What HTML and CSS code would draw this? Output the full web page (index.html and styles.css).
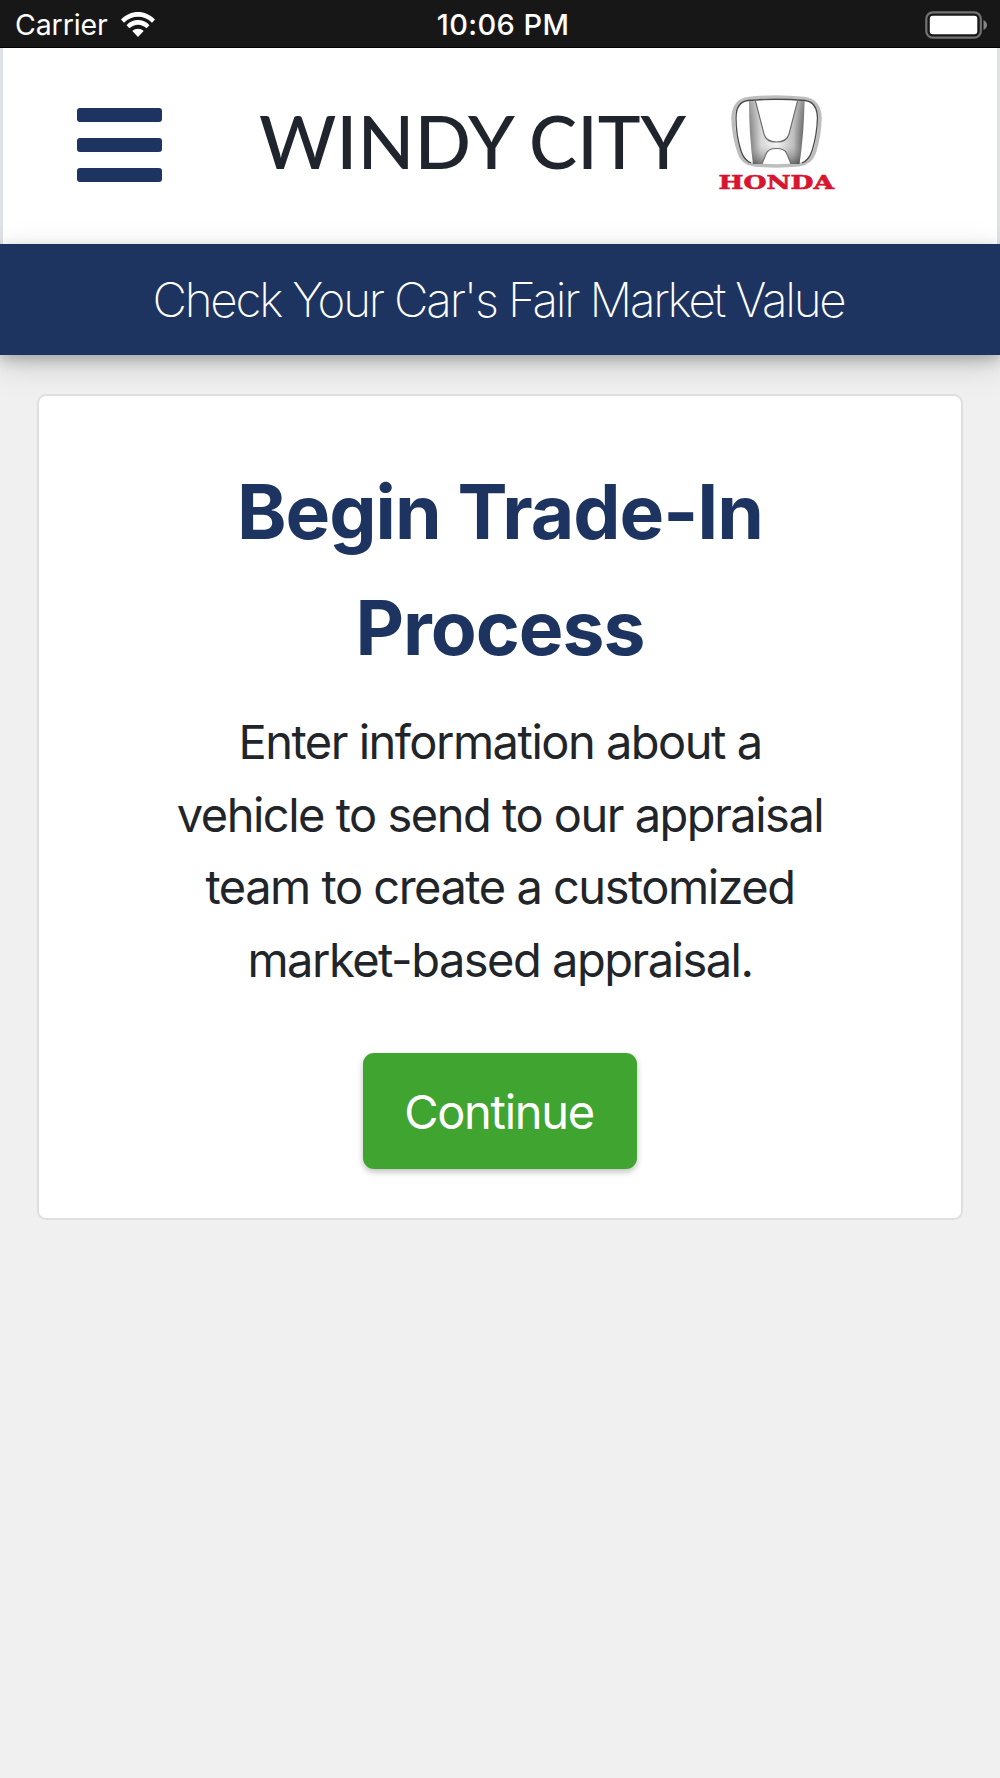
FILE: index.html
```html
<!DOCTYPE html>
<html lang="en">
    <head>
        <meta charset="UTF-8">
        <meta name="viewport" content="width=device-width, initial-scale=1.0">
        <title>Windy City Honda</title>
        <link rel="stylesheet" href="styles.css">
    </head>
    <body>

        <div class="status-bar">
            <div class="carrier">
                <span class="carrier-name">Carrier</span>
                <svg class="wifi" width="34" height="25" viewBox="0 0 34 25">
                    <path fill="#fff" d="M0 7.6C9.5-2.5 24.5-2.5 34 7.6L31 10.7C23 2.8 11 2.8 3 10.7ZM5.5 13.2C12 6.4 22 6.4 28.5 13.2L25.5 16.3C20.5 11.4 13.5 11.4 8.5 16.3ZM11.3 19C14.5 16 19.5 16 22.7 19L17 25Z"/>
                </svg>
            </div>
            <span class="clock">10:06 PM</span>
            <svg class="battery" width="65" height="30" viewBox="0 0 65 30">
                <rect x="1.3" y="2.3" width="54.5" height="25.4" rx="6.5" fill="none" stroke="#737373" stroke-width="2.2"/>
                <rect x="4.8" y="5.8" width="47.5" height="18.4" rx="3" fill="#fff"/>
                <path fill="#858585" d="M58.5 10Q62 12 62 15Q62 18 58.5 20Z"/>
            </svg>
        </div>

        <header class="header">
            <button class="menu" aria-label="Menu">
                <span></span>
                <span></span>
                <span></span>
            </button>
            <svg class="logo" width="600" height="120" viewBox="0 0 600 120">
                <defs>
                    <linearGradient id="chrome" x1="0" y1="0" x2="1" y2="0">
                        <stop offset="0" stop-color="#777"/>
                        <stop offset="0.22" stop-color="#dcdcdc"/>
                        <stop offset="0.5" stop-color="#f8f8f8"/>
                        <stop offset="0.8" stop-color="#c0c0c0"/>
                        <stop offset="1" stop-color="#555"/>
                    </linearGradient>
                    <linearGradient id="shade" x1="0" y1="0" x2="0" y2="1">
                        <stop offset="0" stop-color="#fff" stop-opacity="0.3"/>
                        <stop offset="0.7" stop-color="#999" stop-opacity="0.05"/>
                        <stop offset="1" stop-color="#333" stop-opacity="0.6"/>
                    </linearGradient>
                </defs>
                <text class="logo-name" x="9" y="88" textLength="256" lengthAdjust="spacingAndGlyphs">WINDY</text>
                <text class="logo-name" x="279" y="88" textLength="157" lengthAdjust="spacingAndGlyphs">CITY</text>

                <!-- emblem -->
                <path fill="none" stroke="#bdbdbd" stroke-width="3.5" d="M499 17.5Q526 14.5 554 17.5Q569.5 19.5 570 37Q569.5 55 564.5 71Q561 82 549 83.8Q527 86 504 83.8Q492 82 489 71Q483.5 55 483 37Q483.5 19.5 499 17.5Z"/>
                <path fill="none" stroke="#484848" stroke-width="1.3" d="M498 19.5Q526 17 555 19.5Q567 21 567.5 37Q567 54 562 70Q559 79 552 82M501 82Q494 79 491 70Q486 54 486 37Q486 21 498 19.5"/>
                <path fill="url(#chrome)" d="M499 20L505.5 20L514 53Q516 61 526.5 61Q537 61 539 53L547.5 20L554.5 20Q554 53 549.5 83L541 83L537 73Q535 67.5 526.5 67.5Q518 67.5 516 73L512 83L503 83Q499 53 499 20Z"/>
                <path fill="url(#shade)" d="M499 20L505.5 20L514 53Q516 61 526.5 61Q537 61 539 53L547.5 20L554.5 20Q554 53 549.5 83L541 83L537 73Q535 67.5 526.5 67.5Q518 67.5 516 73L512 83L503 83Q499 53 499 20Z"/>
                <path fill="none" stroke="#6a6a6a" stroke-width="1.1" d="M505.5 20L514 53Q516 61 526.5 61Q537 61 539 53L547.5 20M512 83L516 73Q518 67.5 526.5 67.5Q535 67.5 537 73L541 83"/>
                <text class="logo-brand" x="468.5" y="107.8" textLength="115.5" lengthAdjust="spacingAndGlyphs">HONDA</text>
            </svg>
        </header>

        <div class="banner"><span>Check Your Car's Fair Market Value</span></div>

        <main class="card">
            <h1>Begin Trade-In Process</h1>
            <p>Enter information about a vehicle to send to our appraisal team to create a customized market-based appraisal.</p>
            <button class="btn">Continue</button>
        </main>

    </body>
</html>
```
FILE: styles.css
```css
* {
    box-sizing: border-box;
}
body {
    font-family: Inter, "Liberation Sans", sans-serif;
    margin: 0;
    min-height: 1778px;
    background-color: #f0f0f0;
    color: #212529;
}
.status-bar {
    display: grid;
    grid-template-columns: 1fr auto 1fr;
    align-items: center;
    height: 48px;
    padding: 2px 11px 0 15px;
    background-color: #171717;
    border-bottom: 1px solid #000;
    color: #fff;
    font-size: 28.5px;
}
.carrier {
    display: flex;
    align-items: center;
    gap: 13px;
}
.carrier-name {
    letter-spacing: -0.1px;
}
.clock {
    padding-left: 2px;
    font-weight: 500;
    font-size: 29px;
    letter-spacing: 0.4px;
}
.battery {
    justify-self: end;
    margin-right: -1px;
}
.header {
    display: flex;
    align-items: center;
    height: 196px;
    padding-left: 74px;
    background-color: #fff;
    border-left: 3px solid #dee2e6;
    border-right: 3px solid #dee2e6;
}
.menu {
    display: flex;
    flex-direction: column;
    gap: 16px;
    width: 85px;
    padding: 0 0 2px;
    border: 0;
    background: none;
}
.menu span {
    height: 14px;
    border-radius: 3px;
    background-color: #1d3461;
}
.logo {
    margin-left: 88px;
    margin-bottom: 10px;
}
.logo-name {
    font-family: Lato, sans-serif;
    font-size: 72.5px;
    font-weight: 500;
    fill: #1f242d;
}
.logo-brand {
    font-family: "DejaVu Serif", serif;
    font-size: 18px;
    font-weight: bold;
    fill: #d8142f;
    stroke: #d8142f;
    stroke-width: 0.6px;
}
.banner {
    position: relative;
    height: 111px;
    padding-right: 3px;
    background-color: #1d3461;
    box-shadow: 0 5px 13px rgba(0, 0, 0, 0.22), 0 10px 32px rgba(0, 0, 0, 0.15);
    color: #fff;
    font-size: 47.5px;
    font-weight: 200;
    line-height: 111px;
    text-align: center;
    letter-spacing: -2.2px;
}
.card {
    width: 926px;
    height: 826px;
    margin: 39px auto 0;
    padding: 58px 130px 0;
    background-color: #fff;
    border: 2px solid #dfdfdf;
    border-radius: 9px;
    text-align: center;
}
h1 {
    margin: 0;
    color: #1d3461;
    font-size: 75px;
    font-weight: 700;
    line-height: 116px;
    letter-spacing: -1px;
}
p {
    margin: 20px 0 0;
    font-size: 47px;
    line-height: 72.5px;
    letter-spacing: -1.5px;
}
.btn {
    width: 274px;
    height: 116px;
    margin-top: 57px;
    padding: 0 2px 0 0;
    border: 0;
    border-radius: 11px;
    background-color: #40a431;
    box-shadow: 0 3px 6px rgba(0, 0, 0, 0.25);
    color: #fff;
    font-family: inherit;
    font-size: 47px;
    letter-spacing: -1.3px;
}
```
